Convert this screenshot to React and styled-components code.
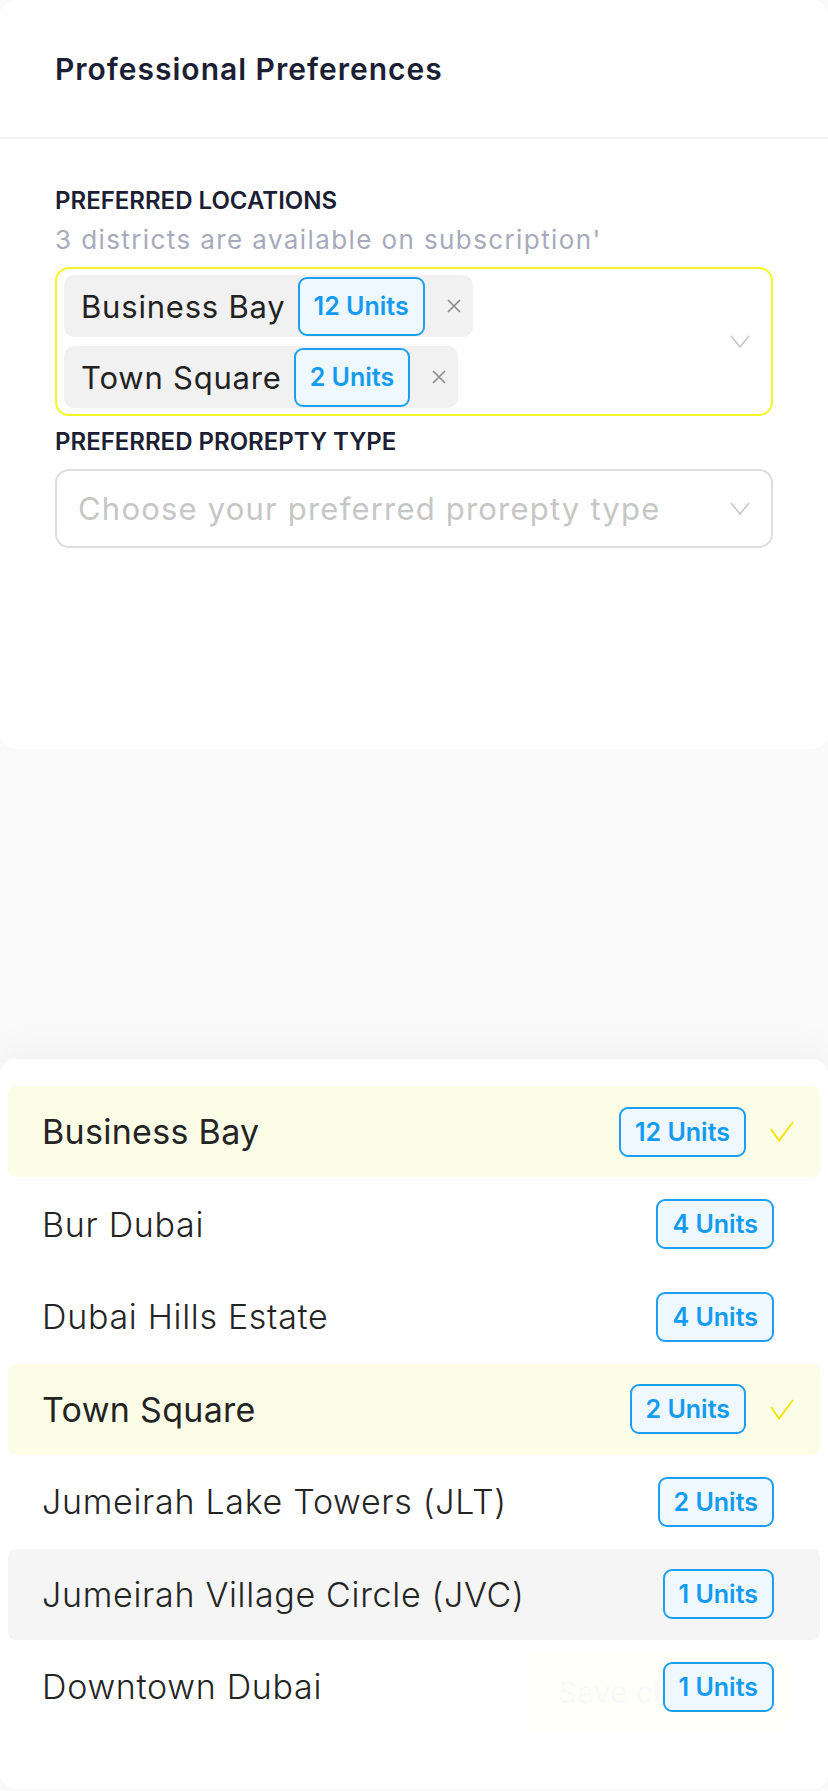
// App.jsx
// Professional preferences screen with an open locations picker sheet.

import React from 'react';
import styled, { createGlobalStyle } from 'styled-components';

// Styles
//////////////////////////////////////////////////////////////////////

const GlobalStyle = createGlobalStyle`
  body {
    margin: 0;
    background: #fafafa;
    font-family: Inter, "Noto Sans", sans-serif;
  }
`

const Page = styled.div`
  display: flex;
  flex-direction: column;
  min-height: 1791px;
`

const Card = styled.div`
  background: #fff;
  border-radius: 16px;
  height: 749px;
  box-sizing: border-box;
`

const Header = styled.div`
  height: 139px;
  box-sizing: border-box;
  border-bottom: 2px solid #f2f2f2;
  padding: 0 55px;
  display: flex;
  align-items: center;
`

const Title = styled.div`
  font-size: 30px;
  font-weight: 600;
  color: #1b1e34;
  letter-spacing: 1px;
`

const Body = styled.div`
  padding: 46px 55px 0;
  display: flex;
  flex-direction: column;
`

const Label = styled.div`
  font-size: 24px;
  line-height: 32px;
  font-weight: 600;
  color: #1b1e34;
  margin-top: ${p => p.$top || 0}px;
`

const Hint = styled.div`
  font-size: 26px;
  line-height: 36px;
  color: #a8aabc;
  letter-spacing: 1.4px;
  margin-top: 5px;
`

const Select = styled.div`
  display: flex;
  align-items: center;
  box-sizing: border-box;
  border: 2px solid ${p => (p.$active ? '#f6f626' : '#dedede')};
  border-radius: 14px;
  padding: ${p => (p.$active ? '6px 21px 6px 7px' : '0 21px 0 21px')};
  min-height: ${p => (p.$active ? 'auto' : '79px')};
  margin-top: ${p => p.$top}px;
`

const ChipList = styled.div`
  flex: 1;
  display: flex;
  flex-direction: column;
  align-items: flex-start;
  gap: 9px;
`

const Chip = styled.div`
  height: 62px;
  display: flex;
  align-items: center;
  background: #f1f1f1;
  border-radius: 10px;
  padding: 0 12px 0 17px;
  gap: 12px;
`

const ChipText = styled.span`
  font-size: 31px;
  color: #222;
  letter-spacing: 0.8px;
`

const Close = styled.span`
  display: flex;
  margin-left: 10px;
`

const Placeholder = styled.div`
  flex: 1;
  font-size: 31px;
  color: #c6c6c6;
  letter-spacing: 1.2px;
`

const Badge = styled.span`
  display: inline-flex;
  align-items: center;
  justify-content: center;
  box-sizing: border-box;
  height: ${p => (p.$tall ? 59 : 50)}px;
  padding: 0 14px;
  border: 2px solid #1c9ff2;
  border-radius: 9px;
  background: #eff8ff;
  color: #139bf2;
  font-size: 25px;
  font-weight: 600;
`

const Sheet = styled.div`
  position: relative;
  margin-top: 310px;
  background: #fff;
  border-radius: 16px;
  padding: 27px 8px 57px;
  box-shadow: 0 -14px 36px rgba(0, 0, 0, 0.035);
  display: flex;
  flex-direction: column;
  gap: 1.5px;
`

const Row = styled.div`
  position: relative;
  z-index: 1;
  height: 91px;
  display: flex;
  align-items: center;
  gap: 24px;
  padding: 0 ${p => (p.$selected ? 26 : 46)}px 0 34px;
  border-radius: 8px;
  background: ${p => (p.$selected ? '#fbfde6' : p.$hover ? '#f5f5f5' : 'transparent')};
`

const RowText = styled.span`
  flex: 1;
  font-size: 34px;
  font-weight: ${p => (p.$selected ? 400 : 300)};
  color: #242424;
  letter-spacing: ${p => (p.$selected ? 0.3 : 0.7)}px;
`

// faded footer button showing through under the sheet
const SaveBtn = styled.div`
  position: absolute;
  left: 528px;
  top: 593px;
  width: 259px;
  height: 80px;
  border-radius: 12px;
  background: #fffffa;
  display: flex;
  align-items: center;
  justify-content: center;
  font-size: 30px;
  color: #f9f9f9;
`

// Icons
//////////////////////////////////////////////////////////////////////

const Chevron = () => (
  <svg width="20" height="13" viewBox="0 0 20 13">
    <path d="M1 1 L10 12 L19 1" fill="none" stroke="#c6c6c6" strokeWidth="1.6" />
  </svg>
)

const Cross = () => (
  <svg width="14" height="14" viewBox="0 0 14 14">
    <path d="M1 1 L13 13 M13 1 L1 13" stroke="#8a8a8a" strokeWidth="1.6" />
  </svg>
)

const Check = () => (
  <svg width="24" height="21" viewBox="0 0 24 21">
    <path d="M1 8 L9 19.5 L23 1" fill="none" stroke="#f2e40a" strokeWidth="2" />
  </svg>
)

// Data
//////////////////////////////////////////////////////////////////////

const chips = [
  { name: 'Business Bay', units: 12 },
  { name: 'Town Square', units: 2 },
]

const districts = [
  { name: 'Business Bay', units: 12, selected: true },
  { name: 'Bur Dubai', units: 4 },
  { name: 'Dubai Hills Estate', units: 4 },
  { name: 'Town Square', units: 2, selected: true },
  { name: 'Jumeirah Lake Towers (JLT)', units: 2 },
  { name: 'Jumeirah Village Circle (JVC)', units: 1, hover: true },
  { name: 'Downtown Dubai', units: 1 },
]

// Render Page
//////////////////////////////////////////////////////////////////////

const App = () => {
  return (
    <Page>
      <GlobalStyle />
      <Card>
        <Header>
          <Title>Professional Preferences</Title>
        </Header>
        <Body>
          <Label>PREFERRED LOCATIONS</Label>
          <Hint>3 districts are available on subscription'</Hint>
          <Select $active $top={9}>
            <ChipList>
              {chips.map(c => (
                <Chip key={c.name}>
                  <ChipText>{c.name}</ChipText>
                  <Badge $tall>{c.units} Units</Badge>
                  <Close><Cross /></Close>
                </Chip>
              ))}
            </ChipList>
            <Chevron />
          </Select>
          <Label $top={10}>PREFERRED PROREPTY TYPE</Label>
          <Select $top={11}>
            <Placeholder>Choose your preferred prorepty type</Placeholder>
            <Chevron />
          </Select>
        </Body>
      </Card>

      <Sheet>
        {districts.map(d => (
          <Row key={d.name} $selected={d.selected} $hover={d.hover}>
            <RowText $selected={d.selected}>{d.name}</RowText>
            <Badge>{d.units} Units</Badge>
            {d.selected && <Check />}
          </Row>
        ))}
        <SaveBtn>Save changes</SaveBtn>
      </Sheet>
    </Page>
  );
};

export default App;

//////////////////////////////////////////////////////////////////////
// End Component
